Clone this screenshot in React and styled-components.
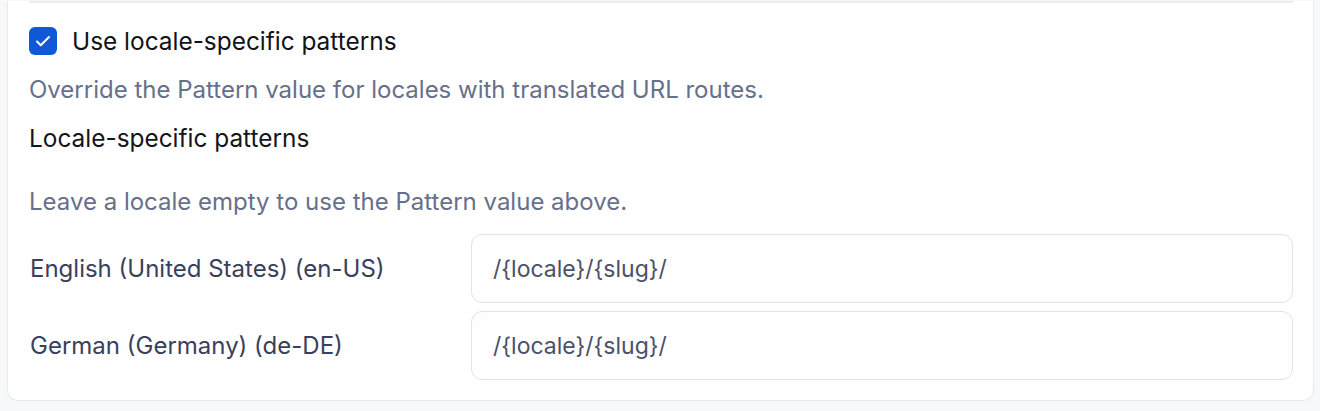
import React, { useState } from 'react';
import styled, { createGlobalStyle } from 'styled-components';

const GlobalStyle = createGlobalStyle`
  html, body {
    margin: 0;
    padding: 0;
    background: #f7f8fa;
    font-family: Inter, "Noto Sans", sans-serif;
    -webkit-font-smoothing: antialiased;
  }
`;

const Page = styled.div`
  padding: 0 6px 10px 7px;
`;

const Card = styled.section`
  background: #ffffff;
  border: 1px solid #e8eaed;
  border-top: none;
  border-radius: 0 0 11px 11px;
  padding: 0 20px 20px 21px;
`;

const Divider = styled.hr`
  margin: 0;
  border: none;
  border-top: 2px solid #ebecef;
  margin-top: 1px;
`;

const CheckRow = styled.label`
  display: flex;
  align-items: center;
  gap: 15px;
  margin-top: 24px;
  cursor: pointer;
`;

const Box = styled.span`
  width: 28px;
  height: 28px;
  border-radius: 6px;
  background: ${(p) => (p.$checked ? '#1059d6' : '#ffffff')};
  border: ${(p) => (p.$checked ? 'none' : '1px solid #c9cdd4')};
  display: flex;
  align-items: center;
  justify-content: center;
  flex-shrink: 0;
`;

const CheckLabel = styled.span`
  font-size: 24.4px;
  color: #111318;
  line-height: 28px;
`;

const Help = styled.p`
  margin: ${(p) => p.$mt || 0}px 0 0 0;
  font-size: 24px;
  line-height: 28px;
  color: #66708a;
`;

const Heading = styled.h3`
  margin: 20px 0 0 0;
  font-size: 24.4px;
  line-height: 28px;
  font-weight: 400;
  color: #14161b;
`;

const Rows = styled.div`
  display: flex;
  flex-direction: column;
  gap: 8px;
  margin-top: 18px;
`;

const Row = styled.div`
  display: grid;
  grid-template-columns: 442px 1fr;
  align-items: center;
`;

const RowLabel = styled.span`
  font-size: 24px;
  color: #39415a;
  padding-left: 1px;
`;

const Input = styled.input`
  box-sizing: border-box;
  height: 69px;
  width: 100%;
  border: 1px solid #e1e3e7;
  border-radius: 11px;
  background: #fefefe;
  padding: 0 21px;
  font-family: inherit;
  font-size: 23px;
  color: #4a5168;
  outline: none;
`;

const locales = [
  { name: 'English (United States) (en-US)', value: '/{locale}/{slug}/' },
  { name: 'German (Germany) (de-DE)', value: '/{locale}/{slug}/' },
];

export default function App() {
  const [checked, setChecked] = useState(true);
  const [values, setValues] = useState(locales.map((l) => l.value));

  return (
    <Page>
      <GlobalStyle />
      <Card>
        <Divider />
        <CheckRow onClick={() => setChecked(!checked)}>
          <Box $checked={checked}>
            {checked && (
              <svg width="20" height="20" viewBox="0 0 16 16" fill="none">
                <path d="M3.2 8.4l3 3L12.8 4.8" stroke="#fff" strokeWidth="1.6" strokeLinecap="round" strokeLinejoin="round" />
              </svg>
            )}
          </Box>
          <CheckLabel>Use locale-specific patterns</CheckLabel>
        </CheckRow>
        <Help $mt={21}>Override the Pattern value for locales with translated URL routes.</Help>
        <Heading>Locale-specific patterns</Heading>
        <Help $mt={36}>Leave a locale empty to use the Pattern value above.</Help>
        <Rows>
          {locales.map((l, i) => (
            <Row key={l.name}>
              <RowLabel>{l.name}</RowLabel>
              <Input
                value={values[i]}
                onChange={(e) => {
                  const next = [...values];
                  next[i] = e.target.value;
                  setValues(next);
                }}
              />
            </Row>
          ))}
        </Rows>
      </Card>
    </Page>
  );
}
